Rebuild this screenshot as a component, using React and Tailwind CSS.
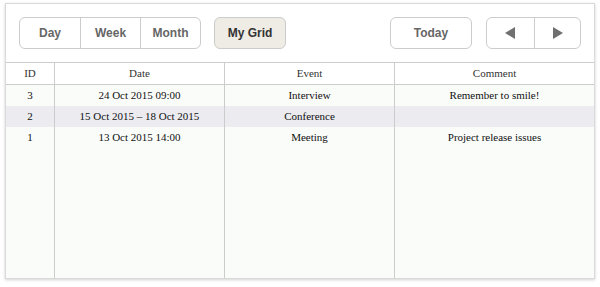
import React from "react";

const rows = [
  { id: "3", date: "24 Oct 2015 09:00", event: "Interview", comment: "Remember to smile!" },
  { id: "2", date: "15 Oct 2015 – 18 Oct 2015", event: "Conference", comment: "", alt: true },
  { id: "1", date: "13 Oct 2015 14:00", event: "Meeting", comment: "Project release issues" },
];

const cols = "grid grid-cols-[48px_170px_170px_1fr]";

function Cell({ children, first }) {
  return (
    <div className={`flex items-center justify-center ${first ? "" : "border-l border-[#cccccc]"}`}>
      {children}
    </div>
  );
}

export default function App() {
  return (
    <div className="w-[600px] h-[287px] bg-white pt-[3px] pl-[5px]">
      <div
        className="w-[590px] h-[276px] flex flex-col border border-[#d9d9d9] bg-white shadow-[0_1px_3px_rgba(0,0,0,0.18)]"
        style={{ fontFamily: '"Liberation Sans", Arial, sans-serif' }}
      >
        <div className="h-[59px] shrink-0 flex items-start pt-[13px] pl-[13px] pr-[13px] border-b border-[#cccccc]">
          <div className="flex h-[32px] border border-[#cccccc] rounded-[6px] bg-white">
            {["Day", "Week", "Month"].map((t, i) => (
              <div
                key={t}
                className={`w-[60px] flex items-center justify-center text-[12px] font-bold text-[#666666] ${i > 0 ? "border-l border-[#cccccc]" : ""}`}
              >
                {t}
              </div>
            ))}
          </div>
          <div className="ml-[13px] w-[72px] h-[32px] flex items-center justify-center border border-[#cccccc] rounded-[6px] bg-[#efebe5] text-[12px] font-bold text-[#333333]">
            My Grid
          </div>
          <div className="ml-auto w-[82px] h-[32px] flex items-center justify-center border border-[#cccccc] rounded-[6px] bg-white text-[12px] font-bold text-[#666666]">
            Today
          </div>
          <div className="ml-[14px] flex h-[32px] border border-[#cccccc] rounded-[6px] bg-white">
            <div className="w-[47px] flex items-center justify-center">
              <svg width="11" height="12" viewBox="0 0 11 12"><polygon points="10,0 10,12 0,6" fill="#707070" /></svg>
            </div>
            <div className="w-[46px] flex items-center justify-center border-l border-[#cccccc]">
              <svg width="11" height="12" viewBox="0 0 11 12"><polygon points="1,0 1,12 11,6" fill="#707070" /></svg>
            </div>
          </div>
        </div>
        <div
          className="flex-1 flex flex-col bg-[#fafcf9] text-[11px] text-[#111111]"
          style={{ fontFamily: '"Liberation Serif", "Times New Roman", serif' }}
        >
          <div className={`${cols} h-[22px] shrink-0 bg-white border-b border-[#cccccc] text-[#333333]`}>
            <Cell first>ID</Cell>
            <Cell>Date</Cell>
            <Cell>Event</Cell>
            <Cell>Comment</Cell>
          </div>
          {rows.map((r) => (
            <div key={r.id} className={`${cols} h-[21px] shrink-0 ${r.alt ? "bg-[#ebebf0]" : ""}`}>
              <Cell first>{r.id}</Cell>
              <Cell>{r.date}</Cell>
              <Cell>{r.event}</Cell>
              <Cell>{r.comment}</Cell>
            </div>
          ))}
          <div className={`${cols} flex-1`}>
            <Cell first />
            <Cell />
            <Cell />
            <Cell />
          </div>
        </div>
      </div>
    </div>
  );
}
